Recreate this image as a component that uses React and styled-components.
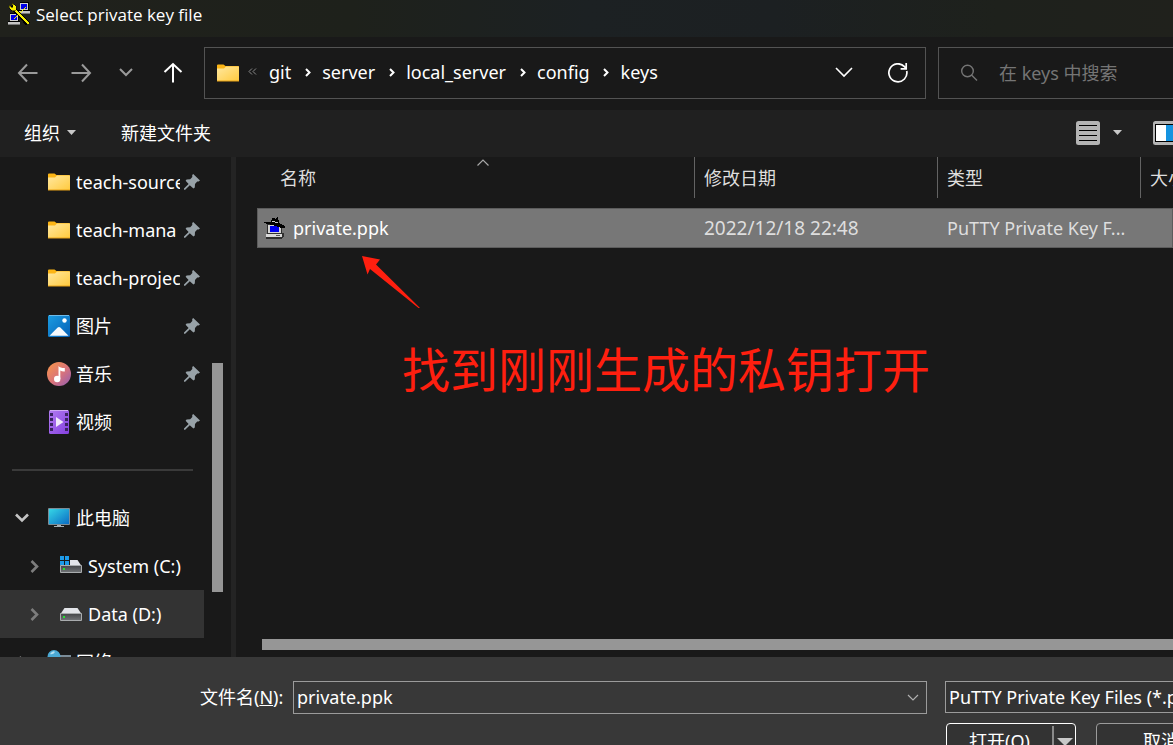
import React from "react";
import styled, { createGlobalStyle } from "styled-components";

const GlobalStyle = createGlobalStyle`
  * { box-sizing: border-box; }
  html, body { margin: 0; height: 100%; background: #191919; }
  body, button, input, select {
    font-family: "Noto Sans", "Noto Sans CJK SC", sans-serif;
    font-size: 18px;
    line-height: 24px;
    color: #fff;
  }
  button, input, select { margin: 0; padding: 0; border: 0; border-radius: 0; background: none; outline: none; }
  svg { display: block; flex: none; }
`;

const Dialog = styled.div`
  display: flex;
  flex-direction: column;
  height: 100vh;
  overflow: hidden;
  background: #191919;
`;

const TitleBar = styled.header`
  display: flex;
  flex: none;
  align-items: flex-start;
  gap: 6px;
  height: 37px;
  padding: 2px 8px;
  background: linear-gradient(90deg, #20211c 0%, #1e211b 30%, #1c2123 50%, #1c2022 66%, #1e211c 85%, #20211c 100%);
`;

const Title = styled.h1`
  margin: 0;
  font-family: "Open Sans", sans-serif;
  font-size: 17px;
  font-weight: 400;
  line-height: 26px;
  white-space: nowrap;
`;

const NavBar = styled.nav`
  display: flex;
  flex: none;
  align-items: center;
  gap: 12px;
  height: 73px;
  padding: 0 0 2px 8px;
`;

const NavButtons = styled.div`
  display: flex;
  gap: 23px;
  width: 184px;
`;

const IconButton = styled.button`
  display: flex;
  flex: none;
  align-items: center;
  justify-content: center;
  width: ${(p) => p.$width || 24}px;
  height: 32px;
  color: ${(p) => (p.$dim ? "#9a9a9a" : "#fff")};
`;

const AddressBar = styled.div`
  display: flex;
  flex: 1;
  align-items: center;
  min-width: 0;
  height: 52px;
  padding: 0 15px 0 12px;
  border: 1px solid #535353;
`;

const Crumbs = styled.ol`
  display: flex;
  flex: 1;
  align-items: center;
  min-width: 0;
  margin: 0;
  padding: 0 0 2px 9px;
  list-style: none;
`;

const Crumb = styled.li`
  display: flex;
  align-items: center;
`;

const CrumbLink = styled.a`
  color: #fff;
  text-decoration: none;
  white-space: nowrap;
`;

const CrumbGap = styled.span`
  display: flex;
  justify-content: center;
  width: 31px;
  padding: 2px 0 0 2px;
`;

const CrumbOverflow = styled.li`
  padding-right: 12px;
`;

const AddressActions = styled.div`
  display: flex;
  gap: 30px;
`;

const SearchBox = styled.label`
  display: flex;
  flex: none;
  align-items: center;
  gap: 21px;
  width: 235px;
  height: 52px;
  padding-left: 21px;
  border: 1px solid #535353;
  border-right: 0;
  color: #757575;
`;

const SearchInput = styled.input`
  flex: 1;
  min-width: 0;
  &::placeholder { color: #757575; opacity: 1; }
`;

const ToolBar = styled.div`
  display: flex;
  flex: none;
  align-items: center;
  gap: 45px;
  height: 47px;
  padding: 0 0 2px 24px;
  overflow: hidden;
  background: #202020;
`;

const ToolButton = styled.button`
  display: flex;
  flex: none;
  align-items: center;
  gap: 7px;
  height: 36px;
`;

const ViewTools = styled.div`
  display: flex;
  gap: 31px;
  margin: 0 -13px 0 auto;
`;

const ViewCaret = styled.span`
  padding-left: 6px;
`;

const Main = styled.main`
  display: flex;
  flex: 1;
  min-height: 0;
`;

const Sidebar = styled.aside`
  display: flex;
  flex: none;
  width: 236px;
  overflow: hidden;
  border-right: 5px solid #242424;
`;

const Tree = styled.ul`
  flex: none;
  width: 204px;
  margin: 0;
  padding: 1px 0 0;
  list-style: none;
`;

const TreeItem = styled.li`
  display: flex;
  align-items: center;
  height: 48px;
  padding: 0 4px 0 ${(p) => (p.$child ? 24 : 12)}px;
  background: ${(p) => (p.$selected ? "#333" : "transparent")};
`;

const Toggle = styled.span`
  display: flex;
  flex: none;
  justify-content: center;
  width: 20px;
  margin-right: 15px;
`;

const IconSlot = styled.span`
  display: flex;
  flex: none;
  justify-content: center;
  width: 24px;
`;

const TreeLabel = styled.span`
  flex: 1;
  min-width: 0;
  margin: 0 ${(p) => (p.$pinned ? 4 : 0)}px 0 5px;
  overflow: hidden;
  white-space: nowrap;
`;

const Divider = styled.hr`
  flex: 1;
  height: 2px;
  margin: 0 7px 0 0;
  border: 0;
  background: #3a3a3a;
`;

const SideTrack = styled.div`
  flex: none;
  width: 27px;
  padding: 206px 8px 0;
`;

const SideThumb = styled.div`
  width: 11px;
  height: 229px;
  background: #969696;
`;

const FilePane = styled.section`
  position: relative;
  display: flex;
  flex: 1;
  flex-direction: column;
  justify-content: space-between;
  min-width: 0;
  padding-left: 21px;
`;

const FileTable = styled.table`
  width: 100%;
  table-layout: fixed;
  border-collapse: collapse;
`;

const HeadCell = styled.th`
  width: ${(p) => (p.$width ? `${p.$width}px` : "auto")};
  height: 51px;
  padding: 0;
  vertical-align: top;
  text-align: left;
  font-weight: 400;
  color: #dedede;
`;

const HeadLabel = styled.div`
  position: relative;
  height: 41px;
  margin-left: ${(p) => (p.$first ? 14 : 0)}px;
  padding: 9px 0 0 9px;
  overflow: hidden;
  white-space: nowrap;
  border-right: ${(p) => (p.$last ? 0 : 1)}px solid #636363;
`;

const SortMark = styled.span`
  position: absolute;
  top: 2px;
  left: 0;
  right: 0;
  display: flex;
  justify-content: center;
`;

const FileRow = styled.tr`
  background: #777;
  box-shadow: inset 0 0 0 1px #5c5c5c;
`;

const FileCell = styled.td`
  height: 40px;
  padding: 0 0 0 ${(p) => (p.$name ? 7 : 9)}px;
  font-size: ${(p) => (p.$numeric ? 19 : 18)}px;
  color: ${(p) => (p.$name ? "#fff" : "#dedede")};
  overflow: hidden;
  white-space: nowrap;
`;

const FileName = styled.span`
  display: flex;
  align-items: center;
  gap: 7px;
`;

const ScrollTrack = styled.div`
  padding: 0 0 7px 5px;
`;

const ScrollThumb = styled.div`
  height: 11px;
  background: #969696;
`;

const NoteArrow = styled.svg`
  position: absolute;
  top: 97px;
  left: 125px;
`;

const Note = styled.p`
  position: absolute;
  top: 178px;
  left: 166px;
  margin: 0;
  font-size: 48px;
  line-height: 70px;
  color: #ff1f0f;
  white-space: nowrap;
`;

const Footer = styled.footer`
  display: flex;
  flex: none;
  flex-direction: column;
  gap: 10px;
  height: 88px;
  padding-top: 24px;
  overflow: hidden;
  background: #383838;
`;

const FieldRow = styled.div`
  display: flex;
  flex: none;
  align-items: flex-start;
  padding-left: 200px;
`;

const FieldLabel = styled.label`
  flex: none;
  width: 93px;
  line-height: 32px;
  white-space: nowrap;
`;

const NameField = styled.div`
  display: flex;
  flex: 1;
  align-items: center;
  min-width: 0;
  height: 33px;
  margin-right: 18px;
  padding: 0 1px 0 3px;
  border: 1px solid #9b9b9b;
`;

const NameInput = styled.input`
  flex: 1;
  min-width: 0;
  height: 28px;
  padding-bottom: 1px;
`;

const TypeSelect = styled.select`
  appearance: none;
  flex: none;
  width: 228px;
  height: 32px;
  padding: 0 0 1px 3px;
  border: 1px solid #9b9b9b;
  border-right: 0;
  background: #333;
`;

const Actions = styled.div`
  display: flex;
  flex: none;
  justify-content: flex-end;
  gap: 20px;
  margin: -1px -53px 0 0;
`;

const SplitButton = styled.div`
  display: flex;
  width: 130px;
  height: 36px;
  border: 1px solid #fff;
  border-radius: 4px;
  background: #333;
`;

const SplitMain = styled.button`
  flex: 1;
`;

const SplitArrow = styled.button`
  display: flex;
  align-items: center;
  justify-content: center;
  width: 23px;
  margin-top: 2px;
  border-left: 2px solid #8a8a8a;
`;

const CancelButton = styled.button`
  width: 130px;
  height: 36px;
  border: 1px solid #9b9b9b;
  border-radius: 4px;
  background: #333;
`;

const Chevron = ({ d, w, h, color = "#fff", stroke = 2 }) => (
  <svg width={w} height={h} fill="none" stroke={color} strokeWidth={stroke}>
    <path d={d} />
  </svg>
);

const Arrow = ({ turn = 0 }) => (
  <svg width="22" height="22" viewBox="0 0 22 22" fill="none" stroke="currentColor" strokeWidth="2">
    <g transform={`rotate(${turn} 11 11)`}>
      <path d="M2 11H20.5M10 2.5L2 11L10 19.5" />
    </g>
  </svg>
);

const FolderIcon = () => (
  <svg width="22" height="18" viewBox="0 0 22 18">
    <defs>
      <linearGradient id="folder" x1="0" y1="0" x2="1" y2="1">
        <stop offset="0" stopColor="#ffe8a0" />
        <stop offset="1" stopColor="#ffca3e" />
      </linearGradient>
    </defs>
    <path d="M0 1.5Q0 .5 1 .5H6.5L8.5 2H21Q22 2 22 3V8H0Z" fill="#fcb515" />
    <path d="M0 4.5H7L9 2.5H22V17H0Z" fill="url(#folder)" />
    <path d="M0 16.5H22V17.5H0Z" fill="#e8a317" />
  </svg>
);

const PinIcon = () => (
  <svg width="16" height="16" viewBox="0 0 16 16" fill="#98a2a8">
    <path d="M9.2 0L16 6.4L14.6 7.6L13.2 7.6L11 10L10.8 13.4L9.4 14.4L5.8 11.2L1.2 15.8H0V14.6L4.6 10L1.6 6.8L2.6 5.6L6.2 5.2L8.3 3L8.2 1Z" />
  </svg>
);

const PictureIcon = () => (
  <svg width="22" height="22" viewBox="0 0 22 22">
    <defs>
      <linearGradient id="picture" x1="0" y1="0" x2="1" y2="1">
        <stop offset="0" stopColor="#1b9de2" />
        <stop offset="1" stopColor="#0560b6" />
      </linearGradient>
    </defs>
    <rect width="22" height="22" rx="1.5" fill="url(#picture)" />
    <path d="M1 0H21V1H1Z" fill="#6ebbea" />
    <path d="M1.5 20.8L9.4 12.8Q11 11.4 12.6 12.8L20.5 20.8Z" fill="#f5f9fd" />
    <circle cx="16.5" cy="5.5" r="2.2" fill="#fff" />
  </svg>
);

const MusicIcon = () => (
  <svg width="24" height="24" viewBox="0 0 24 24">
    <defs>
      <linearGradient id="music" x1="0" y1="0" x2="1" y2="1">
        <stop offset="0.1" stopColor="#f5914f" />
        <stop offset="0.55" stopColor="#d8737c" />
        <stop offset="1" stopColor="#8f5cb5" />
      </linearGradient>
    </defs>
    <circle cx="12" cy="12" r="12" fill="url(#music)" />
    <path d="M11.5 4Q13 6 17.8 6V9.5Q15 9.8 13.3 8.4V17H11.5Z" fill="#fff" />
    <circle cx="10.2" cy="17" r="3.2" fill="#fff" />
  </svg>
);

const VideoIcon = () => (
  <svg width="20" height="24" viewBox="0 0 20 24">
    <defs>
      <linearGradient id="video" x1="0" y1="0" x2="1" y2="1">
        <stop offset="0" stopColor="#b27cf0" />
        <stop offset="1" stopColor="#8440df" />
      </linearGradient>
    </defs>
    <rect width="20" height="24" rx="1.5" fill="url(#video)" />
    <path d="M1 0H19V1H1Z" fill="#cfabf5" />
    {[3, 8, 13, 18].map((y) => (
      <path key={y} d={`M1 ${y}h3v3h-3zM16 ${y}h3v3h-3z`} fill="#3a2361" />
    ))}
    <path d="M7 7L14.5 12L7 17Z" fill="#f0e8fa" />
  </svg>
);

const ComputerIcon = () => (
  <svg width="22" height="20" viewBox="0 0 22 20">
    <defs>
      <linearGradient id="screen" x1="0" y1="0" x2="1" y2="1">
        <stop offset="0" stopColor="#35d6e6" />
        <stop offset="1" stopColor="#0b6cc4" />
      </linearGradient>
    </defs>
    <rect y="0" width="22" height="17" rx="1" fill="#7c8c96" />
    <rect x="1" y="1" width="20" height="15" fill="url(#screen)" />
    <path d="M9 17H13V18H9ZM6 18H16V19H6Z" fill="#a5afb5" />
  </svg>
);

const DriveIcon = ({ system }) => (
  <svg width="22" height="20" viewBox="0 0 22 20">
    <defs>
      <linearGradient id="drive" x1="0" y1="0" x2="0" y2="1">
        <stop offset="0" stopColor="#47494c" />
        <stop offset="1" stopColor="#6e7174" />
      </linearGradient>
    </defs>
    <path d="M4.5 4H17.5L21.5 10H.5Z" fill="#e3e5ea" />
    <rect x="0" y="9" width="22" height="8" rx="1" fill="#a9acae" />
    <rect x="1" y="10" width="20" height="6" fill="url(#drive)" />
    <rect x="3" y="12" width="2" height="2" fill="#27e333" />
    {system && (
      <>
        <path d="M0 0H10V9H0Z" fill="#191919" />
        <path d="M0 0h4v4H0zM5 0h4v4H5zM0 5h4v4H0zM5 5h4v4H5z" fill="#1d9bea" />
      </>
    )}
  </svg>
);

const NetworkIcon = () => (
  <svg width="24" height="24" viewBox="0 0 24 24">
    <rect x="6" y="5" width="18" height="14" fill="#7b8c98" />
    <rect x="8" y="7" width="15" height="11" fill="#1f86cf" />
    <circle cx="7" cy="6.5" r="6.5" fill="#4ba9d4" />
    <path d="M3 4Q6 0 8 2Q6 5 3 4Z" fill="#b5e0f2" />
  </svg>
);

const Terminal = ({ x, y }) => (
  <g transform={`translate(${x} ${y})`}>
    <path d="M2 0H11V8H12V12H0V8H2Z" fill="#000" />
    <path d="M2 1H10V8H2Z" fill="#d0d0d0" />
    <path d="M3 2H9V7H3Z" fill="#0000e8" />
    <path d="M0 9H12V11H0Z" fill="#c4c4c4" />
    <path d="M0 11H12V12H0Z" fill="#777" />
  </g>
);

const PuttygenIcon = () => (
  <svg width="22" height="24" viewBox="0 0 22 24" shapeRendering="crispEdges">
    <Terminal x="10" y="0" />
    <Terminal x="0" y="11" />
    <path d="M3 4L20 22" stroke="#000" strokeWidth="4.5" />
    <path d="M5 6L21 22" stroke="#f6f000" strokeWidth="2.4" />
    <path d="M4 1L8 4V8L4 9L1 6V3L4 6L5 4Z" fill="#f6f000" stroke="#000" strokeWidth=".5" />
    <path d="M18 5L9 14L6 17" stroke="#f6f000" strokeWidth="1.3" fill="none" />
  </svg>
);

const KeyFileIcon = () => (
  <svg width="22" height="22" viewBox="0 0 22 22" shapeRendering="crispEdges">
    <path d="M3 7H18V16H20V20L17 22H2V18L3 17Z" fill="#303030" />
    <path d="M4 8H17V16H4Z" fill="#d4d4d4" />
    <path d="M6 9H15V15H6Z" fill="#0000f0" />
    <path d="M2 17H18V20H2Z" fill="#d8d8d8" />
    <path d="M12 18H16V19H12Z" fill="#555" />
    <path d="M0 5H7L8 1H10L11 2L13 0H14L15 6L21 9V11H17L8 8L0 6Z" fill="#000" />
    <path d="M8 4L14 5V6L8 5Z" fill="#c8c8c8" />
  </svg>
);

const CaretDown = ({ w = 9, h = 5 }) => (
  <svg width={w} height={h} fill="#c8c8c8">
    <path d={`M0 0H${w}L${w / 2} ${h}Z`} />
  </svg>
);

const RefreshIcon = () => (
  <svg width="20" height="20" viewBox="0 0 20 20" fill="none" stroke="currentColor" strokeWidth="1.7">
    <path d="M18.7 8A9 9 0 1 1 16.5 3.7L18 5.5M18.2 0V5.8H12.6" />
  </svg>
);

const SearchIcon = () => (
  <svg width="18" height="18" viewBox="0 0 18 18" fill="none" stroke="currentColor" strokeWidth="1.4">
    <circle cx="7.5" cy="7" r="5.8" />
    <path d="M11.5 11L17 16.5" />
  </svg>
);

const ListViewIcon = () => (
  <svg width="24" height="24" viewBox="0 0 24 24">
    <rect width="24" height="24" rx="2.5" fill="#b4b4b4" />
    <path d="M3 4.5H21M3 9.5H21M3 14.5H21M3 19.5H21" stroke="#000" />
  </svg>
);

const PreviewIcon = () => (
  <svg width="33" height="24" viewBox="0 0 33 24">
    <rect width="33" height="24" rx="2.5" fill="#b4b4b4" />
    <path d="M2 3H31V21H2Z" fill="#000" />
    <path d="M3 4H13V20H3Z" fill="#fff" />
    <path d="M13 4H30V20H13Z" fill="#1593e0" />
  </svg>
);

const crumbs = ["git", "server", "local_server", "config", "keys"];

const pinned = [
  { label: "teach-source", icon: <FolderIcon /> },
  { label: "teach-mana", icon: <FolderIcon /> },
  { label: "teach-project", icon: <FolderIcon /> },
  { label: "图片", icon: <PictureIcon /> },
  { label: "音乐", icon: <MusicIcon /> },
  { label: "视频", icon: <VideoIcon /> },
];

const Collapsed = () => (
  <Toggle>
    <Chevron w={9} h={13} d="M1.5 1L7 6.5L1.5 12" color="#7d7d7d" stroke={2.6} />
  </Toggle>
);

export default function App() {
  return (
    <Dialog>
      <GlobalStyle />
      <TitleBar>
        <PuttygenIcon />
        <Title>Select private key file</Title>
      </TitleBar>

      <NavBar>
        <NavButtons>
          <IconButton $dim $width={40} aria-label="Back"><Arrow /></IconButton>
          <IconButton $dim $width={20} aria-label="Forward"><Arrow turn={180} /></IconButton>
          <IconButton $dim aria-label="Recent locations">
            <Chevron w={14} h={9} d="M1 1L7 7L13 1" color="#9a9a9a" stroke={2} />
          </IconButton>
          <IconButton aria-label="Up"><Arrow turn={90} /></IconButton>
        </NavButtons>
        <AddressBar>
          <FolderIcon />
          <Crumbs>
            <CrumbOverflow>
              <Chevron w={9} h={7} d="M4 .5L1 3.5L4 6.5M8 .5L5 3.5L8 6.5" color="#8a8a8a" stroke={1} />
            </CrumbOverflow>
            {crumbs.map((name, i) => (
              <Crumb key={name}>
                {i > 0 && <CrumbGap><Chevron w={6} h={9} d="M1 1L4.5 4.5L1 8" /></CrumbGap>}
                <CrumbLink href="#">{name}</CrumbLink>
              </Crumb>
            ))}
          </Crumbs>
          <AddressActions>
            <IconButton aria-label="Previous locations">
              <Chevron w={18} h={11} d="M1 1L9 9L17 1" stroke={1.6} />
            </IconButton>
            <IconButton aria-label="Refresh"><RefreshIcon /></IconButton>
          </AddressActions>
        </AddressBar>
        <SearchBox>
          <SearchIcon />
          <SearchInput aria-label="搜索" placeholder="在 keys 中搜索" />
        </SearchBox>
      </NavBar>

      <ToolBar>
        <ToolButton>组织<CaretDown /></ToolButton>
        <ToolButton>新建文件夹</ToolButton>
        <ViewTools>
          <ToolButton aria-label="View"><ListViewIcon /><ViewCaret><CaretDown /></ViewCaret></ToolButton>
          <ToolButton aria-label="Preview pane"><PreviewIcon /></ToolButton>
        </ViewTools>
      </ToolBar>

      <Main>
        <Sidebar>
          <Tree>
            {pinned.map(({ label, icon }) => (
              <TreeItem key={label}>
                <Toggle />
                <IconSlot>{icon}</IconSlot>
                <TreeLabel $pinned>{label}</TreeLabel>
                <PinIcon />
              </TreeItem>
            ))}
            <TreeItem><Divider /></TreeItem>
            <TreeItem>
              <Toggle><Chevron w={14} h={10} d="M1 1.5L7 7.5L13 1.5" color="#c4c4c4" stroke={2.6} /></Toggle>
              <IconSlot><ComputerIcon /></IconSlot>
              <TreeLabel>此电脑</TreeLabel>
            </TreeItem>
            <TreeItem $child>
              <Collapsed />
              <IconSlot><DriveIcon system /></IconSlot>
              <TreeLabel>System (C:)</TreeLabel>
            </TreeItem>
            <TreeItem $child $selected>
              <Collapsed />
              <IconSlot><DriveIcon /></IconSlot>
              <TreeLabel>Data (D:)</TreeLabel>
            </TreeItem>
            <TreeItem>
              <Collapsed />
              <IconSlot><NetworkIcon /></IconSlot>
              <TreeLabel>网络</TreeLabel>
            </TreeItem>
          </Tree>
          <SideTrack><SideThumb /></SideTrack>
        </Sidebar>

        <FilePane>
          <FileTable>
            <thead>
              <tr>
                <HeadCell>
                  <HeadLabel $first>
                    <SortMark><Chevron w={12} h={7} d="M.5 6.5L6 1L11.5 6.5" color="#a8a8a8" stroke={1.2} /></SortMark>
                    名称
                  </HeadLabel>
                </HeadCell>
                <HeadCell $width={243}><HeadLabel>修改日期</HeadLabel></HeadCell>
                <HeadCell $width={203}><HeadLabel>类型</HeadLabel></HeadCell>
                <HeadCell $width={32}><HeadLabel $last>大小</HeadLabel></HeadCell>
              </tr>
            </thead>
            <tbody>
              <FileRow>
                <FileCell $name><FileName><KeyFileIcon />private.ppk</FileName></FileCell>
                <FileCell $numeric>2022/12/18 22:48</FileCell>
                <FileCell>PuTTY Private Key F...</FileCell>
                <FileCell />
              </FileRow>
            </tbody>
          </FileTable>
          <ScrollTrack><ScrollThumb /></ScrollTrack>
          <NoteArrow width="62" height="56" viewBox="0 0 62 56">
            <path d="M1 2L19 5.5L15 10.5L59 54H57.5L9 15L6.5 20.5Z" fill="#ff1f0f" />
          </NoteArrow>
          <Note>找到刚刚生成的私钥打开</Note>
        </FilePane>
      </Main>

      <Footer>
        <FieldRow>
          <FieldLabel htmlFor="file-name">文件名(<u>N</u>):</FieldLabel>
          <NameField>
            <NameInput id="file-name" defaultValue="private.ppk" />
            <IconButton aria-label="Previous files">
              <Chevron w={12} h={7} d="M1 1L6 6L11 1" color="#b0b0b0" stroke={1.2} />
            </IconButton>
          </NameField>
          <TypeSelect aria-label="File type">
            <option>PuTTY Private Key Files (*.ppk)</option>
          </TypeSelect>
        </FieldRow>
        <Actions>
          <SplitButton>
            <SplitMain>打开(<u>O</u>)</SplitMain>
            <SplitArrow aria-label="Open options"><CaretDown w={16} h={8} /></SplitArrow>
          </SplitButton>
          <CancelButton>取消</CancelButton>
        </Actions>
      </Footer>
    </Dialog>
  );
}
